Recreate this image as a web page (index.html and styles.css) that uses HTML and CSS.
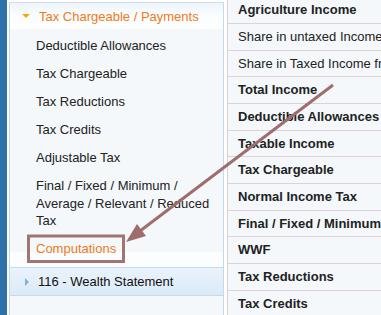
FILE: index.html
```html
<!DOCTYPE html>
<html lang="en">
<head>
  <meta charset="UTF-8">
  <link rel="stylesheet" href="styles.css">
  <title>Computations</title>
</head>
<body>

<div class="strip"></div>

<div class="sidebar">
  <div class="acc-head active">
    <span class="tri-down"></span>
    <span>Tax Chargeable / Payments</span>
  </div>
  <ul class="submenu">
    <li>Deductible Allowances</li>
    <li>Tax Chargeable</li>
    <li>Tax Reductions</li>
    <li>Tax Credits</li>
    <li>Adjustable Tax</li>
    <li>Final / Fixed / Minimum / Average / Relevant / Reduced Tax</li>
    <li class="current">Computations</li>
  </ul>
  <div class="acc-head closed">
    <span class="tri-right"></span>
    <span>116 - Wealth Statement</span>
  </div>
</div>

<div class="sheet">
  <div class="row bold">Agriculture Income</div>
  <div class="row">Share in untaxed Income from AOP</div>
  <div class="row">Share in Taxed Income from AOP</div>
  <div class="row bold">Total Income</div>
  <div class="row bold">Deductible Allowances</div>
  <div class="row bold">Taxable Income</div>
  <div class="row bold">Tax Chargeable</div>
  <div class="row bold">Normal Income Tax</div>
  <div class="row bold">Final / Fixed / Minimum / Average / Relevant / Reduced Tax</div>
  <div class="row bold">WWF</div>
  <div class="row bold">Tax Reductions</div>
  <div class="row bold">Tax Credits</div>
</div>

<!-- annotation drawn over the screenshot -->
<svg class="note" width="381" height="315" viewBox="0 0 381 315">
  <rect x="28.5" y="236" width="95" height="25.5" fill="none" stroke="#a07570" stroke-width="3"/>
  <line x1="333" y1="85" x2="140" y2="231" stroke="#9e6e6c" stroke-width="3"/>
  <polygon points="126,242 146,236 137,224" fill="#9e6e6c"/>
</svg>

</body>
</html>
```

FILE: styles.css
```css
body {
  display: flex;
  margin: 0;
  height: 315px;
  overflow: hidden;
  background: #ffffff;
  font-family: 'Liberation Sans', Arial, sans-serif;
  font-size: 13px;
  color: #222222;
}

.strip {
  width: 7px;
  flex: none;
  background: #2f71a9;
}

.sidebar {
  width: 213px;
  flex: none;
  margin-left: 2px;
  margin-top: 2px;
  border-top: 1px solid #d0dce6;
  border-left: 1px solid #c3d9ec;
  border-right: 1px solid #c3d9ec;
  background: #f4f8fb;
}

.acc-head {
  display: flex;
  align-items: center;
  height: 26px;
}

.acc-head.active {
  padding-left: 12px;
  gap: 9px;
  color: #ee7a1c;
  background: linear-gradient(#eef5fb, #fbfdfe 50%, #fdfefe);
}

.acc-head.closed {
  height: 27px;
  padding-left: 15px;
  gap: 9px;
  color: #111111;
  border-top: 1px solid #c3d9ec;
  border-bottom: 1px solid #c3d9ec;
  background: linear-gradient(#eaf3fb, #dbeaf8);
}

.tri-down {
  width: 0;
  height: 0;
  border-left: 4px solid transparent;
  border-right: 4px solid transparent;
  border-top: 4px solid #f5a80f;
}

.tri-right {
  width: 0;
  height: 0;
  border-top: 4px solid transparent;
  border-bottom: 4px solid transparent;
  border-left: 4px solid #80b2dd;
}

.submenu {
  list-style: none;
  margin: 0;
  padding: 3px 0 4px 0;
}

.submenu li {
  padding: 5.25px 10px 5.25px 26px;
  line-height: 17.5px;
}

.submenu li.current {
  color: #ef7b1d;
  background: linear-gradient(#f4f8fb 50%, #fbfdfe 55%, #fbfdfe);
  margin-bottom: -4px;
  padding-bottom: 9.25px;
}

.sheet {
  flex: 1;
  min-width: 0;
  margin-left: 3px;
  margin-top: -2.67px;
  border-left: 1px solid #dcd2d5;
  background: #f4f8fb;
}

.row {
  height: 25.67px;
  line-height: 26.67px;
  padding-left: 10px;
  border-bottom: 1px solid #dfd1d5;
  white-space: nowrap;
  overflow: hidden;
}

.row.bold {
  font-weight: bold;
}

.note {
  position: absolute;
  left: 0;
  top: 0;
  pointer-events: none;
}
```
